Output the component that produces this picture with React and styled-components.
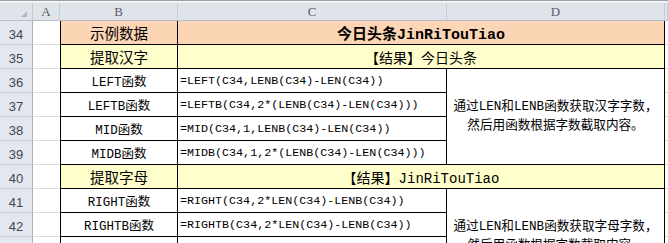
import React from "react";
import styled, { createGlobalStyle, css } from "styled-components";

const GlobalStyle = createGlobalStyle`
  html, body {
    margin: 0;
    padding: 0;
    background: #fff;
    overflow: hidden;
  }
`;

const ROWS = [
  { n: 34, label: "示例数据", tone: "orange", big: true, banner: "今日头条JinRiTouTiao", bold: true },
  { n: 35, label: "提取汉字", tone: "yellow", big: true, banner: "【结果】今日头条" },
  { n: 36, label: "LEFT函数", formula: "=LEFT(C34,LENB(C34)-LEN(C34))" },
  { n: 37, label: "LEFTB函数", formula: "=LEFTB(C34,2*(LENB(C34)-LEN(C34)))" },
  { n: 38, label: "MID函数", formula: "=MID(C34,1,LENB(C34)-LEN(C34))" },
  { n: 39, label: "MIDB函数", formula: "=MIDB(C34,1,2*(LENB(C34)-LEN(C34)))" },
  { n: 40, label: "提取字母", tone: "yellow", big: true, banner: "【结果】JinRiTouTiao" },
  { n: 41, label: "RIGHT函数", formula: "=RIGHT(C34,2*LEN(C34)-LENB(C34))" },
  { n: 42, label: "RIGHTB函数", formula: "=RIGHTB(C34,2*LEN(C34)-LENB(C34))" },
  { n: 43, label: "MID函数", formula: "=MID(C34,LENB(C34)-LEN(C34)+1,99)" },
  { n: 44, label: "MIDB函数", formula: "=MIDB(C34,2*(LENB(C34)-LEN(C34))+1,99)" },
];

const NOTES = [
  { from: 36, span: 4, lines: ["通过LEN和LENB函数获取汉字字数，", "然后用函数根据字数截取内容。"] },
  { from: 41, span: 4, lines: ["通过LEN和LENB函数获取字母字数，", "然后用函数根据字数截取内容。"] },
];

const TONES = { orange: "#fcd5b4", yellow: "#ffffcc" };
const gridRow = (n) => n - 32;

const TopStrip = styled.div`
  height: 2px;
  border-top: 1px solid #9da3ab;
  background: #f2f3f5;
`;

const Sheet = styled.div`
  display: grid;
  grid-template-columns: 33px 27px 118px 269px 218px 1fr;
  grid-template-rows: 18px repeat(11, 24px);
`;

const headerBase = css`
  background: #dfe4eb;
  border-bottom: 1px solid #b7bec8;
  border-right: 1px solid #c7cdd5;
  box-sizing: border-box;
  display: flex;
  align-items: center;
  justify-content: center;
  color: #555c66;
  font-family: "Liberation Serif", serif;
  font-size: 13px;
`;

const Corner = styled.div`
  ${headerBase};
  grid-column: 1;
  grid-row: 1;
  justify-content: flex-end;
  align-items: flex-end;
  padding: 0 5px 3px 0;
`;

const Triangle = styled.span`
  width: 0;
  height: 0;
  border-left: 6px solid transparent;
  border-bottom: 6px solid #b4bac3;
`;

const ColHead = styled.div`
  ${headerBase};
  grid-column: ${(p) => p.$col};
  grid-row: 1;
`;

const RowHead = styled.div`
  ${headerBase};
  grid-column: 1;
  grid-row: ${(p) => p.$row};
  background: #e4e8ee;
  border-right: 1px solid #aab2bc;
  border-bottom: 1px solid #c9ced6;
  color: #3e4550;
  font-family: "Liberation Sans", sans-serif;
  font-size: 13px;
  padding-top: 3px;
`;

const Blank = styled.div`
  grid-column: ${(p) => p.$col};
  grid-row: ${(p) => p.$row};
  border-bottom: 1px solid #dadcdf;
  background: #fff;
`;

const cellBase = css`
  grid-row: ${(p) => p.$row} / span ${(p) => p.$rows || 1};
  box-sizing: border-box;
  border-right: 1px solid #000;
  border-bottom: 1px solid #000;
  display: flex;
  align-items: center;
  justify-content: center;
  white-space: nowrap;
  overflow: hidden;
  color: #000;
  background: ${(p) => (p.$tone ? TONES[p.$tone] : "#fff")};
`;

const Label = styled.div`
  ${cellBase};
  grid-column: 3;
  border-left: 1px solid #000;
  font-family: "Liberation Mono", "Noto Sans CJK SC", monospace;
  font-size: ${(p) => (p.$big ? "14.5px" : "12.5px")};
  font-family: ${(p) =>
    p.$big ? '"Noto Sans CJK SC", sans-serif' : '"Liberation Mono", "Noto Sans CJK SC", monospace'};
`;

const Formula = styled.div`
  ${cellBase};
  grid-column: 4;
  justify-content: flex-start;
  padding-left: 2px;
  font-family: "Liberation Mono", monospace;
  font-size: 11.7px;
`;

const Banner = styled.div`
  ${cellBase};
  grid-column: 4 / span 2;
  font-family: "Liberation Mono", "Noto Sans CJK SC", monospace;
  font-size: ${(p) => (p.$bold ? "15px" : "14px")};
  font-weight: ${(p) => (p.$bold ? 700 : 400)};
`;

const Note = styled.div`
  ${cellBase};
  grid-column: 5;
  flex-direction: column;
  font-family: "Liberation Mono", "Noto Sans CJK SC", monospace;
  font-size: 12.6px;
  line-height: 19px;
`;

export default function App() {
  return (
    <>
      <GlobalStyle />
      <TopStrip />
      <Sheet>
        <Corner>
          <Triangle />
        </Corner>
        {["A", "B", "C", "D", ""].map((c, i) => (
          <ColHead key={i} $col={i + 2}>
            {c}
          </ColHead>
        ))}
        {ROWS.map((r) => {
          const row = gridRow(r.n);
          return (
            <React.Fragment key={r.n}>
              <RowHead $row={row}>{r.n}</RowHead>
              <Blank $col={2} $row={row} />
              <Label $row={row} $tone={r.tone} $big={r.big}>
                {r.label}
              </Label>
              {r.banner ? (
                <Banner $row={row} $tone={r.tone} $bold={r.bold}>
                  {r.banner}
                </Banner>
              ) : (
                <Formula $row={row}>{r.formula}</Formula>
              )}
              <Blank $col={6} $row={row} />
            </React.Fragment>
          );
        })}
        {NOTES.map((n) => (
          <Note key={n.from} $row={gridRow(n.from)} $rows={n.span}>
            {n.lines.map((l) => (
              <span key={l}>{l}</span>
            ))}
          </Note>
        ))}
      </Sheet>
    </>
  );
}
